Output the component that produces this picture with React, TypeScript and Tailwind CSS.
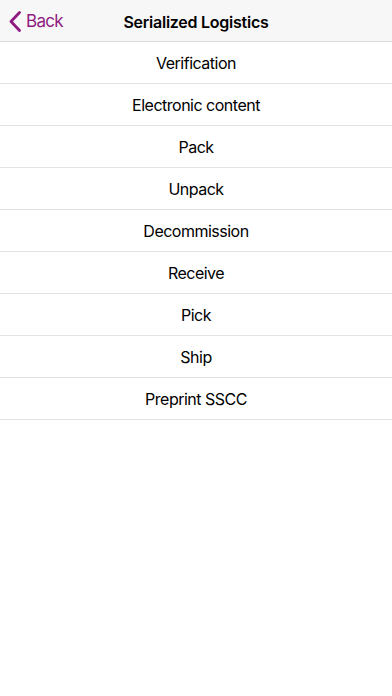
const items = [
  "Verification",
  "Electronic content",
  "Pack",
  "Unpack",
  "Decommission",
  "Receive",
  "Pick",
  "Ship",
  "Preprint SSCC",
];

export default function App() {
  return (
    <div
      className="flex h-[696px] w-full flex-col bg-white text-black"
      style={{ fontFamily: "Inter, 'Noto Sans', sans-serif" }}
    >
      {/* Nav bar */}
      <header className="relative flex h-[42px] shrink-0 items-center justify-center border-b border-[#dcdcdc] bg-[#f7f7f7]">
        <button className="absolute left-[9px] top-0 flex h-[43px] items-center gap-[5px] text-[17px] tracking-[-0.7px] text-[#8e1b80]">
          <svg width="12" height="21" viewBox="0 0 12 21" fill="none">
            <path
              d="M10.5 1.5 L2 10.5 L10.5 19.5"
              stroke="currentColor"
              strokeWidth="2.8"
              strokeLinecap="round"
              strokeLinejoin="round"
            />
          </svg>
          <span>Back</span>
        </button>
        <h1 className="pt-[2px] text-[16px] font-semibold tracking-[-0.25px]">Serialized Logistics</h1>
      </header>

      {/* Menu */}
      <ul className="flex flex-col">
        {items.map((item) => (
          <li
            key={item}
            className="flex h-[42px] items-center justify-center border-b border-[#e3e3e3] pt-[1px] text-[16px] tracking-[-0.5px]"
          >
            {item}
          </li>
        ))}
      </ul>
    </div>
  );
}
